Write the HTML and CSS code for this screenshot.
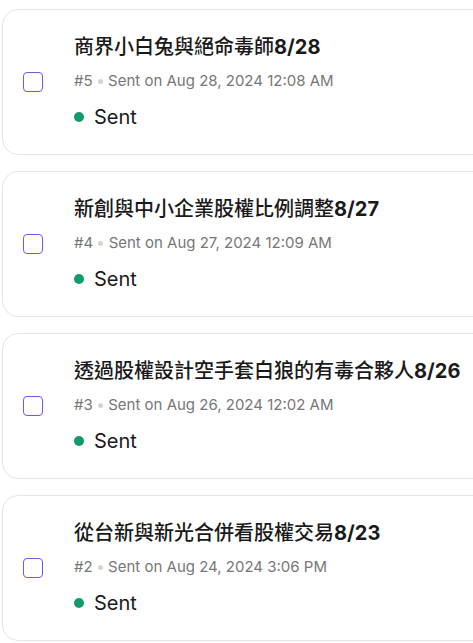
FILE: index.html
```html
<!DOCTYPE html>
<html lang="zh-Hant">
<head>
  <meta charset="UTF-8">
  <meta name="viewport" content="width=device-width, initial-scale=1.0">
  <title>Posts</title>
<link rel="stylesheet" href="styles.css">
</head>
<body>
  <!-- 文章列表 -->
  <ul class="postList">
    <li class="post">
      <span class="check"></span>
      <div class="info">
        <h3 class="title">商界小白兔與絕命毒師<b>8/28</b></h3>
        <p class="meta">#5 <i class="sep"></i> Sent on Aug 28, 2024 12:08 AM</p>
        <p class="status"><i class="dot"></i>Sent</p>
      </div>
    </li>
    <li class="post">
      <span class="check"></span>
      <div class="info">
        <h3 class="title">新創與中小企業股權比例調整<b>8/27</b></h3>
        <p class="meta">#4 <i class="sep"></i> Sent on Aug 27, 2024 12:09 AM</p>
        <p class="status"><i class="dot"></i>Sent</p>
      </div>
    </li>
    <li class="post">
      <span class="check"></span>
      <div class="info">
        <h3 class="title">透過股權設計空手套白狼的有毒合夥人<b>8/26</b></h3>
        <p class="meta">#3 <i class="sep"></i> Sent on Aug 26, 2024 12:02 AM</p>
        <p class="status"><i class="dot"></i>Sent</p>
      </div>
    </li>
    <li class="post">
      <span class="check"></span>
      <div class="info">
        <h3 class="title">從台新與新光合併看股權交易<b>8/23</b></h3>
        <p class="meta">#2 <i class="sep"></i> Sent on Aug 24, 2024 3:06 PM</p>
        <p class="status"><i class="dot"></i>Sent</p>
      </div>
    </li>
  </ul>
</body>
</html>
```

FILE: styles.css
```css
*{margin: 0;padding: 0;box-sizing: border-box;}
body{
  background: #fff;
  font-family: Inter, "Noto Sans CJK TC", sans-serif;
  color: #1c1c1c;
  overflow: hidden;
}
.postList{
  list-style: none;
  padding: 9px 0 0 2px;
  display: flex;
  flex-direction: column;
  gap: 16px;
  width: 520px;
}
.post{
  display: flex;
  align-items: center;
  gap: 31px;
  padding: 23px 20px 23px 20px;
  border: 1px solid #e4e4e4;
  border-radius: 16px;
}
.check{
  flex: none;
  width: 20px;height: 20px;
  border: 1.5px solid #6b5ce8;
  border-radius: 4px;
}
.info .title{
  font-size: 20px;
  line-height: 28px;
  font-weight: 500;
  color: #1a1a1a;
  white-space: nowrap;
}
.info .title b{
  font-weight: 700;
}
.info .meta{
  margin-top: 10px;
  font-size: 15px;
  line-height: 20px;
  color: #777;
}
.meta .sep{
  display: inline-block;
  width: 5px;height: 5px;
  border-radius: 50%;
  background: #d4d4d4;
  vertical-align: middle;
  margin: 0 1px;
}
.info .status{
  margin-top: 12px;
  font-size: 20px;
  line-height: 28px;
  display: flex;
  align-items: center;
  color: #1a1a1a;
}
.status .dot{
  width: 10px;height: 10px;
  border-radius: 50%;
  background: #119a6e;
  margin-right: 10px;
}
```
